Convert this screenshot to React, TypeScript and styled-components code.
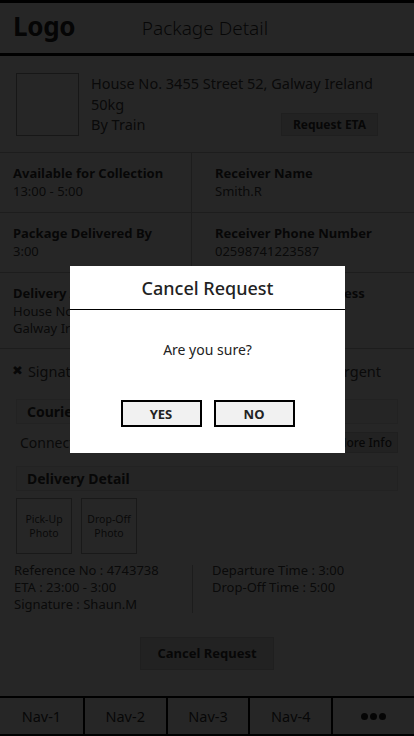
import styled, { createGlobalStyle } from 'styled-components';

const GlobalStyle = createGlobalStyle`
  html, body {
    margin: 0;
    padding: 0;
    background: #fff;
  }
  body {
    font-family: "Noto Sans", "Open Sans", sans-serif;
    color: #444;
  }
  * { box-sizing: border-box; }
`;

// PAGE
const Page = styled.div`
  width: 414px;
  height: 736px;
  display: flex;
  flex-direction: column;
  background: #fff;
`;

const Header = styled.header`
  height: 56px;
  flex: none;
  border-top: 3px solid #000;
  border-bottom: 3px solid #000;
  display: grid;
  grid-template-columns: 1fr auto 1fr;
  align-items: center;
  padding: 0 13px;
`;

const Logo = styled.div`
  font-size: 26px;
  font-weight: 700;
  color: #222;
  letter-spacing: -0.3px;
  margin-top: -4px;
`;

const Title = styled.h1`
  margin: 0 0 0 -4px;
  font-size: 19px;
  font-weight: 300;
  color: #333;
`;

// PACKAGE SUMMARY
const Summary = styled.section`
  display: flex;
  gap: 12px;
  height: 96px;
  padding: 17px 36px 0 16px;
`;

const Thumb = styled.div`
  width: 63px;
  height: 63px;
  flex: none;
  border: 1px solid #999;
`;

const SummaryInfo = styled.div`
  flex: 1;
  display: flex;
  flex-direction: column;
  font-size: 14.5px;
  line-height: 20.5px;
`;

const SummaryBottom = styled.div`
  height: 20.5px;
  display: flex;
  justify-content: space-between;
  align-items: center;
`;

const GhostButton = styled.button<{ $size?: number; $pad?: string; $weight?: number }>`
  font-family: inherit;
  font-weight: ${p => p.$weight ?? 700};
  font-size: ${p => p.$size ?? 12}px;
  color: #333;
  background: #e4e4e4;
  border: 1px solid #d2d2d2;
  padding: ${p => p.$pad ?? '3px 11px'};
  margin: 0;
  line-height: 15px;
  cursor: pointer;
`;

// DETAIL GRID
const Grid = styled.div`
  display: grid;
  grid-template-columns: 192px 1fr;
  border-top: 1px solid #c4c4c4;
`;

const Cell = styled.div<{ $tall?: boolean }>`
  height: ${p => (p.$tall ? 76 : 60)}px;
  padding: 12px 13px 0 13px;
  border-bottom: 1px solid #c4c4c4;
  &:nth-child(odd) { border-right: 1px solid #c4c4c4; }
  &:nth-child(even) { padding-left: 23px; }
`;

const Label = styled.div`
  font-size: 13px;
  font-weight: 700;
  color: #333;
  line-height: 17px;
`;

const Value = styled.div`
  font-size: 13px;
  line-height: 17px;
  margin-top: 1px;
`;

const Options = styled.div`
  height: 50px;
  display: flex;
  justify-content: space-between;
  align-items: center;
  padding: 0 33px 7px 12px;
  font-size: 14.5px;
  line-height: 20px;
`;

const Option = styled.span`
  display: flex;
  align-items: center;
  gap: 5px;
`;

const Mark = styled.span`
  font-family: "DejaVu Sans", sans-serif;
  font-size: 13px;
  line-height: 1;
  color: #333;
`;

// COURIER / DELIVERY
const Block = styled.section`
  padding: 0 16px;
`;

const BlockHead = styled.div`
  height: 25px;
  display: flex;
  align-items: center;
  padding-left: 10px;
  font-size: 14px;
  font-weight: 700;
  color: #333;
  background: #f6f6f6;
  border: 1px solid #e2e2e2;
`;

const CourierRow = styled.div`
  display: flex;
  justify-content: space-between;
  align-items: center;
  height: 42px;
  padding: 0 0 5px 4px;
  font-size: 14px;
`;

const Photos = styled.div`
  display: flex;
  gap: 9px;
  padding-top: 7px;
`;

const Photo = styled.div`
  width: 56px;
  height: 56px;
  border: 1px solid #aaa;
  display: flex;
  align-items: center;
  justify-content: center;
  text-align: center;
  font-size: 10.5px;
  line-height: 14px;
`;

const InfoCols = styled.div`
  display: grid;
  grid-template-columns: 178px 1fr;
  padding-top: 8px;
  margin-left: -2px;
`;

const InfoCol = styled.div<{ $divider?: boolean }>`
  font-size: 13px;
  line-height: 17px;
  padding-left: ${p => (p.$divider ? '19px' : '0')};
  border-left: ${p => (p.$divider ? '1px solid #bbb' : 'none')};
  margin-top: ${p => (p.$divider ? '3px' : '0')};
  min-height: 48px;
  & > div:first-child { margin-top: ${p => (p.$divider ? '-3px' : '0')}; }
`;

const Footer = styled.div`
  display: flex;
  justify-content: center;
  padding: 24px 0 0;
`;

// NAV
const Nav = styled.nav`
  margin-top: auto;
  height: 40px;
  flex: none;
  display: grid;
  grid-template-columns: repeat(5, 1fr);
  border-top: 2px solid #000;
  border-bottom: 2px solid #000;
`;

const NavItem = styled.div`
  display: flex;
  align-items: center;
  justify-content: center;
  font-size: 14.5px;
  color: #333;
  & + & { border-left: 2px solid #000; }
`;

const Dots = styled.span`
  display: flex;
  gap: 2px;
  & > i {
    width: 7px;
    height: 7px;
    border-radius: 50%;
    background: #222;
  }
`;

// MODAL
const Overlay = styled.div`
  position: fixed;
  inset: 0;
  background: rgba(0, 0, 0, 0.85);
  display: flex;
  align-items: flex-start;
  justify-content: center;
  padding-top: 266px;
`;

const Modal = styled.div`
  width: 275px;
  height: 187px;
  background: #fff;
  display: flex;
  flex-direction: column;
  margin-left: 1px;
`;

const ModalTitle = styled.div`
  height: 44px;
  display: flex;
  align-items: center;
  justify-content: center;
  font-size: 18px;
  font-weight: 500;
  color: #222;
  border-bottom: 1.5px solid #000;
`;

const ModalText = styled.div`
  text-align: center;
  font-size: 14px;
  color: #222;
  margin-top: 30px;
`;

const ModalActions = styled.div`
  display: flex;
  justify-content: center;
  gap: 12px;
  margin-top: 41px;
`;

const ModalButton = styled.button`
  width: 81px;
  height: 27px;
  border: 2px solid #000;
  background: #f1f1f1;
  font-family: inherit;
  font-size: 13px;
  font-weight: 700;
  color: #222;
  padding: 0;
  cursor: pointer;
`;

const App = () => {
  return (
    <>
      <GlobalStyle />
      <Page>
        <Header>
          <Logo>Logo</Logo>
          <Title>Package Detail</Title>
          <span />
        </Header>

        <Summary>
          <Thumb />
          <SummaryInfo>
            <span>House No. 3455 Street 52, Galway Ireland</span>
            <span>50kg</span>
            <SummaryBottom>
              <span>By Train</span>
              <GhostButton>Request ETA</GhostButton>
            </SummaryBottom>
          </SummaryInfo>
        </Summary>

        <Grid>
          <Cell>
            <Label>Available for Collection</Label>
            <Value>13:00 - 5:00</Value>
          </Cell>
          <Cell>
            <Label>Receiver Name</Label>
            <Value>Smith.R</Value>
          </Cell>
          <Cell>
            <Label>Package Delivered By</Label>
            <Value>3:00</Value>
          </Cell>
          <Cell>
            <Label>Receiver Phone Number</Label>
            <Value>02598741223587</Value>
          </Cell>
          <Cell $tall>
            <Label>Delivery Address</Label>
            <Value>House No. 3455 Street 52, Galway Ireland</Value>
          </Cell>
          <Cell $tall>
            <Label>Receiver Email Address</Label>
            <Value>smith.r@mail.com</Value>
          </Cell>
        </Grid>

        <Options>
          <Option><Mark>✖</Mark>Signature Required</Option>
          <Option><Mark>✔</Mark>Urgent</Option>
        </Options>

        <Block>
          <BlockHead>Courier Detail</BlockHead>
          <CourierRow>
            <span>Connected Courier: Shaun.M</span>
            <GhostButton $weight={500} $pad="2px 5px">More Info</GhostButton>
          </CourierRow>
          <BlockHead>Delivery Detail</BlockHead>
          <Photos>
            <Photo>Pick-Up<br />Photo</Photo>
            <Photo>Drop-Off<br />Photo</Photo>
          </Photos>
          <InfoCols>
            <InfoCol>
              <div>Reference No : 4743738</div>
              <div>ETA : 23:00 - 3:00</div>
              <div>Signature : Shaun.M</div>
            </InfoCol>
            <InfoCol $divider>
              <div>Departure Time : 3:00</div>
              <div>Drop-Off Time : 5:00</div>
            </InfoCol>
          </InfoCols>
        </Block>

        <Footer>
          <GhostButton $size={13} $pad="8px 16px">Cancel Request</GhostButton>
        </Footer>

        <Nav>
          <NavItem>Nav-1</NavItem>
          <NavItem>Nav-2</NavItem>
          <NavItem>Nav-3</NavItem>
          <NavItem>Nav-4</NavItem>
          <NavItem>
            <Dots><i /><i /><i /></Dots>
          </NavItem>
        </Nav>
      </Page>

      <Overlay>
        <Modal>
          <ModalTitle>Cancel Request</ModalTitle>
          <ModalText>Are you sure?</ModalText>
          <ModalActions>
            <ModalButton>YES</ModalButton>
            <ModalButton>NO</ModalButton>
          </ModalActions>
        </Modal>
      </Overlay>
    </>
  );
};

export default App;
